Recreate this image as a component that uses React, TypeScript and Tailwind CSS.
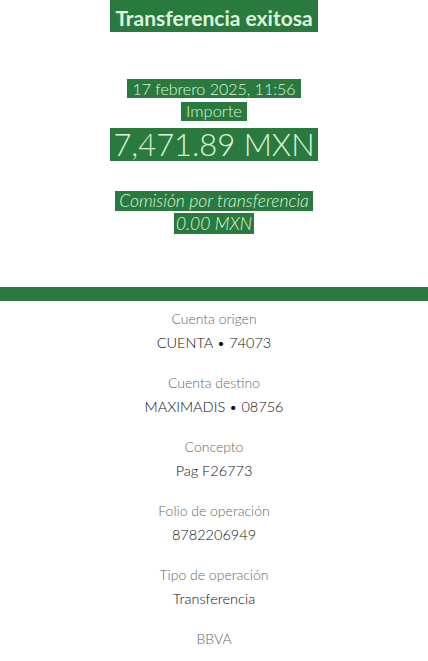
import React from "react";

const G = "bg-[#2a7a3f]";

function Hl({ children, cls }: { children: React.ReactNode; cls: string }) {
  return (
    <div className="flex justify-center">
      <span className={`block ${G} text-[#dcf5dc] ${cls}`}>{children}</span>
    </div>
  );
}

const rows: [string, string][] = [
  ["Cuenta origen", "CUENTA • 74073"],
  ["Cuenta destino", "MAXIMADIS • 08756"],
  ["Concepto", "Pag F26773"],
  ["Folio de operación", "8782206949"],
  ["Tipo de operación", "Transferencia"],
];

export default function App() {
  return (
    <div className="w-[428px] h-[661px] bg-white overflow-hidden text-center" style={{ fontFamily: "Lato, 'Open Sans', sans-serif" }}>
      <Hl cls="h-[32px] leading-[36px] px-[5px] text-[21px] font-bold">Transferencia exitosa</Hl>
      <div className="mt-[47px]">
        <Hl cls="h-[19px] leading-[19px] px-[5px] text-[16px] font-light">17 febrero 2025, 11:56</Hl>
      </div>
      <div className="mt-[4px]">
        <Hl cls="h-[19px] leading-[19px] px-[5px] text-[16.5px] font-light">Importe</Hl>
      </div>
      <div className="mt-[7px]">
        <Hl cls="h-[33px] leading-[33px] px-[3px] text-[31px] font-light">7,471.89 MXN</Hl>
      </div>
      <div className="mt-[30px]">
        <Hl cls="h-[20px] leading-[20px] px-[4px] text-[17.5px] font-light italic">Comisión por transferencia</Hl>
      </div>
      <div className="mt-[2px]">
        <Hl cls="h-[21px] leading-[21px] px-[2px] text-[17.5px] font-light italic">0.00 MXN</Hl>
      </div>
      <div className={`mt-[53px] h-[14px] ${G}`} />
      <div className="mt-[6px] flex flex-col gap-[16px]">
        {rows.map(([l, v]) => (
          <div key={l}>
            <div className="text-[14px] leading-[24px] font-light text-[#666]">{l}</div>
            <div className="text-[14.5px] leading-[24px] font-light text-[#111]">{v}</div>
          </div>
        ))}
        <div className="text-[14px] leading-[24px] font-light text-[#666]">BBVA</div>
      </div>
    </div>
  );
}
